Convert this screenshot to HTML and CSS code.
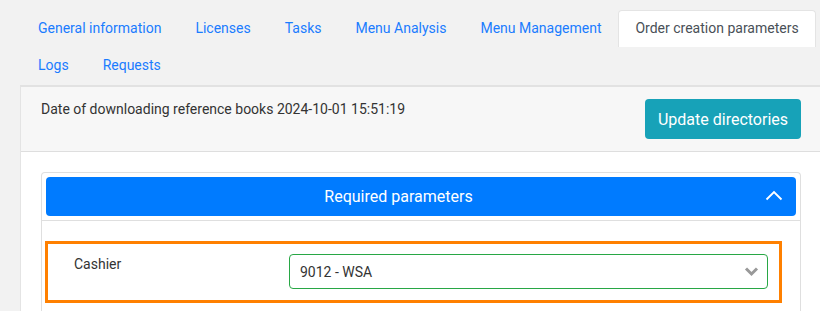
FILE: index.html
```html
<!DOCTYPE html>
<html>
<head>
	<title>Order creation parameters</title>
	<link rel="stylesheet" href="styles.css">
</head>
<body>
	<div class="page">
		<ul class="tabs">
			<li><a href="#">General information</a></li>
			<li><a href="#">Licenses</a></li>
			<li><a href="#">Tasks</a></li>
			<li><a href="#">Menu Analysis</a></li>
			<li><a href="#">Menu Management</a></li>
			<li><a href="#" class="active">Order creation parameters</a></li>
			<li><a href="#">Logs</a></li>
			<li><a href="#">Requests</a></li>
		</ul>
		<div class="card">
			<div class="card-header">
				<span class="download-date">Date of downloading reference books 2024-10-01 15:51:19</span>
				<button type="button" class="btn-update">Update directories</button>
			</div>
			<div class="card-body">
				<div class="group">
					<div class="group-head">
						<button type="button" class="btn-toggle">
							<span class="toggle-title">Required parameters</span>
							<span class="toggle-icon">
								<svg width="18" height="11" viewBox="0 0 18 11">
									<polyline points="1.5,9.5 9,2 16.5,9.5" fill="none" stroke="#fff" stroke-width="1.8"/>
								</svg>
							</span>
						</button>
					</div>
					<div class="group-body">
						<div class="field">
							<label for="cashier">Cashier</label>
							<div class="select">
								<span id="cashier">9012 - WSA</span>
								<svg width="15" height="11" viewBox="0 0 15 11">
									<polyline points="2,2.5 7.5,8 13,2.5" fill="none" stroke="#999" stroke-width="3"/>
								</svg>
							</div>
						</div>
					</div>
				</div>
			</div>
		</div>
	</div>
</body>
</html>
```

FILE: styles.css
```css
body {
	margin: 0;
	background-color: #f2f2f2;
	font-family: Roboto, "Liberation Sans", sans-serif;
	font-size: 14px;
	color: #212529;
}
.page {
	padding: 10px 0 0 20px;
	width: 802px;
}
.tabs {
	list-style: none;
	margin: 0 0 0 1px;
	padding: 0;
	display: flex;
	flex-wrap: wrap;
}
.tabs a {
	display: block;
	padding: 7px 16px 8px 16px;
	line-height: 21px;
	color: #1a7cff;
	text-decoration: none;
	border: 1px solid transparent;
	border-bottom: none;
	border-radius: 4px 4px 0 0;
}
.tabs a.active {
	background-color: #fff;
	color: #495057;
	border-color: #e4e4e4;
}
.card {
	margin-top: 1px;
	border-top: 2px solid #e2e2e2;
	border-left: 1px solid #e4e4e4;
	border-right: 1px solid #e4e4e4;
	background-color: #fff;
}
.card-header {
	display: flex;
	justify-content: space-between;
	align-items: flex-start;
	padding: 12px 20px;
	background-color: #f7f7f7;
	border-bottom: 1px solid #dedede;
}
.download-date {
	line-height: 21px;
	color: #333;
}
.btn-update {
	width: 156px;
	height: 40px;
	border: none;
	border-radius: 4px;
	background-color: #17a2b8;
	color: #fff;
	font-family: inherit;
	font-size: 16px;
}
.card-body {
	padding: 20px 20px 0 20px;
}
.group {
	border: 1px solid #dfdfdf;
	border-bottom: none;
	border-radius: 4px 4px 0 0;
	height: 140px;
}
.group-head {
	padding: 4px;
	border-bottom: 1px solid #dfdfdf;
}
.btn-toggle {
	display: flex;
	align-items: center;
	width: 100%;
	height: 39px;
	padding: 0;
	border: none;
	border-radius: 4px;
	background-color: #007bff;
	color: #fff;
	font-family: inherit;
	font-size: 16px;
}
.toggle-title {
	flex: 1;
	text-align: center;
}
.toggle-icon {
	display: flex;
	justify-content: center;
	width: 45px;
	margin-top: -3px;
}
.group-body {
	padding: 20px 18px 0 3px;
}
.field {
	display: flex;
	align-items: flex-start;
	border: 3px solid #ff8000;
	padding: 10px 11px 11px 26px;
}
.field label {
	width: 215px;
	line-height: 20px;
	color: #333;
}
.select {
	flex: 1;
	display: flex;
	justify-content: space-between;
	align-items: center;
	height: 35px;
	box-sizing: border-box;
	padding: 0 8px 0 10px;
	border: 1px solid #28a745;
	border-radius: 4px;
	background-color: #fff;
	color: #333;
}
```
